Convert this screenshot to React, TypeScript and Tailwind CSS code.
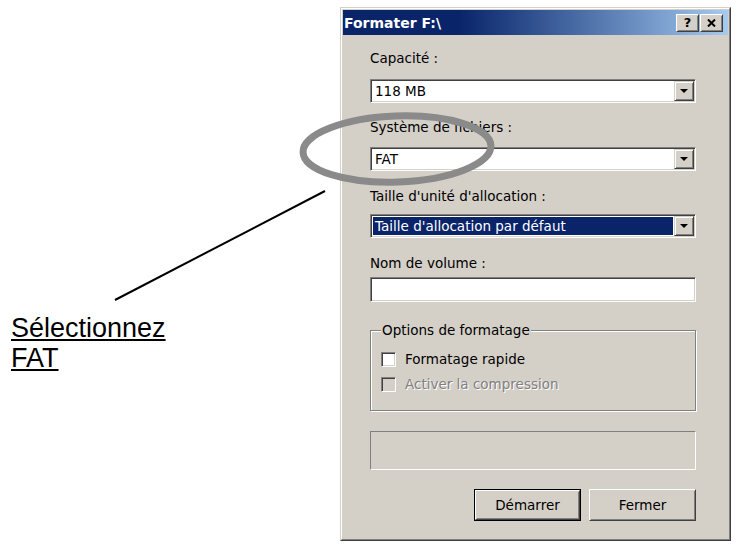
const sunken =
  "border border-t-[#808080] border-l-[#808080] border-b-white border-r-white shadow-[inset_1px_1px_0_#404040,inset_-1px_-1px_0_#d4d0c8] p-[1px]";
const raised =
  "border border-t-[#d4d0c8] border-l-[#d4d0c8] border-b-[#404040] border-r-[#404040] shadow-[inset_1px_1px_0_#fff,inset_-1px_-1px_0_#808080] bg-[#d4d0c8]";
const pushBtn =
  "border border-t-white border-l-white border-b-[#404040] border-r-[#404040] shadow-[inset_1px_1px_0_#d4d0c8,inset_-1px_-1px_0_#808080] bg-[#d4d0c8]";

const Arrow = () => (
  <svg width="8" height="4" viewBox="0 0 8 4">
    <path d="M0 0h8L4 4z" fill="#000" />
  </svg>
);

const Combo = ({ value, selected }: { value: string; selected?: boolean }) => (
  <div className={`h-[24px] w-full flex bg-white ${sunken}`}>
    <div className="flex-1 flex items-center p-[1px]">
      <div className={`h-full w-full flex items-center pl-[2px] ${selected ? "bg-[#0a246a] text-white" : "text-black"}`}>
        {value}
      </div>
    </div>
    <div className={`w-[20px] h-full flex items-center justify-center ${raised}`}>
      <Arrow />
    </div>
  </div>
);

const Checkbox = ({ label, disabled }: { label: string; disabled?: boolean }) => (
  <div className="h-[16px] flex items-center gap-[9px]">
    <div className={`w-[15px] h-[15px] ${sunken} ${disabled ? "bg-[#d4d0c8]" : "bg-white"}`} />
    <span className={disabled ? "text-[#808080] [text-shadow:1px_1px_0_#fff]" : "text-black"}>{label}</span>
  </div>
);

const Dialog = () => (
  <div className="w-[391px] h-[534px] border border-t-[#d4d0c8] border-l-[#d4d0c8] border-b-[#404040] border-r-[#404040] bg-[#d4d0c8]">
    <div className="h-full border border-t-white border-l-white border-b-[#808080] border-r-[#808080] p-[1px] flex flex-col font-['DejaVu_Sans',sans-serif] text-[13.5px] leading-[16px]">
      <div className="h-[25px] shrink-0 flex items-center justify-between pl-[1px] pr-[5px] bg-linear-to-r from-[#0a246a] from-30% to-[#a6caf0]">
        <span className="text-white font-bold text-[14px]">Formater F:\</span>
        <div className="flex gap-[1px]">
          <div className={`w-[23px] h-[18px] flex items-center justify-center font-bold text-[13px] text-black ${pushBtn}`}>?</div>
          <div className={`w-[23px] h-[18px] flex items-center justify-center ${pushBtn}`}>
            <svg width="9" height="8" viewBox="0 0 9 8">
              <path d="M1 0.5L8 7.5M8 0.5L1 7.5" stroke="#000" strokeWidth="2" />
            </svg>
          </div>
        </div>
      </div>

      <div className="pl-[27px] w-[353px] flex flex-col text-black">
        <div className="mt-[15px]">Capacité :</div>
        <div className="mt-[13px]">
          <Combo value="118 MB" />
        </div>
        <div className="mt-[16px]">Système de fichiers :</div>
        <div className="mt-[12px]">
          <Combo value="FAT" />
        </div>
        <div className="mt-[17px]">Taille d'unité d'allocation :</div>
        <div className="mt-[10px]">
          <Combo value="Taille d'allocation par défaut" selected />
        </div>
        <div className="mt-[17px]">Nom de volume :</div>
        <div className={`mt-[6px] h-[25px] w-full bg-white ${sunken}`} />

        <fieldset className="mt-[20px] h-[89px] px-[10px] border border-[#808080] shadow-[inset_1px_1px_0_#fff,1px_1px_0_#fff]">
          <legend className="px-[1px] bg-[#d4d0c8]">Options de formatage</legend>
          <div className="mt-[13px]">
            <Checkbox label="Formatage rapide" />
          </div>
          <div className="mt-[9px]">
            <Checkbox label="Activer la compression" disabled />
          </div>
        </fieldset>

        <div className="mt-[20px] h-[39px] border border-t-[#808080] border-l-[#808080] border-b-white border-r-white" />

        <div className="mt-[19px] flex justify-end gap-[8px]">
          <div className="w-[107px] h-[32px] border border-black">
            <div className={`h-full flex items-center justify-center ${pushBtn}`}>Démarrer</div>
          </div>
          <div className={`w-[107px] h-[32px] flex items-center justify-center ${pushBtn}`}>Fermer</div>
        </div>
      </div>
    </div>
  </div>
);

export default function App() {
  return (
    <div className="relative w-[737px] h-[545px] bg-white flex overflow-hidden">
      <div className="w-[340px] shrink-0 pt-[313px] pl-[11px] font-['Liberation_Sans',Arial,sans-serif] text-[27px] leading-[30px] text-black">
        <div className="underline">Sélectionnez</div>
        <div className="underline">FAT</div>
      </div>
      <div className="pt-[7px]">
        <Dialog />
      </div>
      <svg className="absolute inset-0 pointer-events-none" width="737" height="545" viewBox="0 0 737 545">
        <line x1="115" y1="300" x2="325" y2="191" stroke="#000" strokeWidth="2" />
        <ellipse cx="397" cy="149" rx="94" ry="33" fill="none" stroke="#8a8a8a" strokeWidth="7" transform="rotate(-2 397 149)" />
      </svg>
    </div>
  );
}
